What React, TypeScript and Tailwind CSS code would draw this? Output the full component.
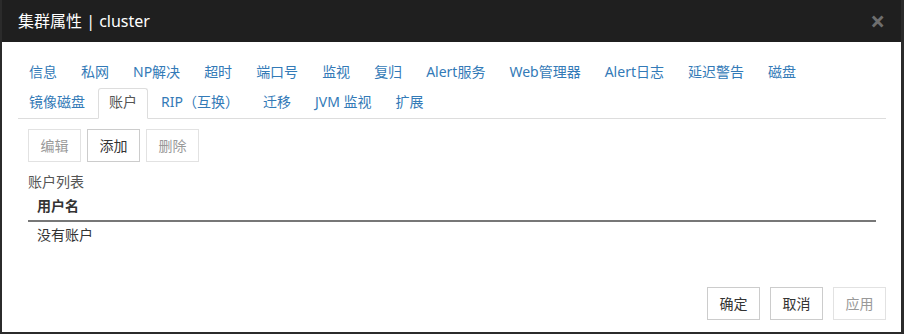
import React from 'react';

const row1 = ['信息', '私网', 'NP解决', '超时', '端口号', '监视', '复归', 'Alert服务', 'Web管理器', 'Alert日志', '延迟警告', '磁盘'];
const row2 = ['镜像磁盘', '账户', 'RIP（互换）', '迁移', 'JVM 监视', '扩展'];

const Tab: React.FC<{ label: string; active?: boolean }> = ({ label, active }) => (
  <div
    className={
      'mr-[2px] px-[10px] pt-[4px] pb-[6px] leading-[18px] border whitespace-nowrap ' +
      (active
        ? 'border-[#ddd] border-b-white bg-white text-[#555] rounded-t-[3px] -mb-px relative z-10'
        : 'border-transparent text-[#337ab7]')
    }
  >
    {label}
  </div>
);

const Btn: React.FC<{ label: string; disabled?: boolean }> = ({ label, disabled }) => (
  <button
    className={
      'h-[33px] w-[53px] border bg-white text-[14px] ' +
      (disabled ? 'border-[#e2e2e2] text-[#999]' : 'border-[#ccc] text-[#333]')
    }
  >
    {label}
  </button>
);

export default function App() {
  return (
    <div
      className="w-[904px] h-[334px] flex flex-col bg-white border-l-2 border-r-[3px] border-b-2 border-[#2b2b2b] text-[14px]"
      style={{ fontFamily: '"Noto Sans", "Noto Sans CJK SC", sans-serif' }}
    >
      {/* header */}
      <div className="h-[42px] bg-[#1f1f1f] flex items-center justify-between pl-[16px] pr-[16px]">
        <span className="text-white text-[16px]">集群属性 | cluster</span>
        <span className="text-[#6e6e6e] text-[26px] font-bold leading-none">×</span>
      </div>

      <div className="flex-1 flex flex-col pl-[16px] pr-[15px] pt-[16px]">
        {/* tabs */}
        <div className="border-b border-[#ddd]">
          <div className="flex">
            {row1.map((t) => (
              <Tab key={t} label={t} />
            ))}
          </div>
          <div className="flex">
            {row2.map((t) => (
              <Tab key={t} label={t} active={t === '账户'} />
            ))}
          </div>
        </div>

        {/* panel */}
        <div className="px-[10px] pt-[10px]">
          <div className="flex gap-[6px]">
            <Btn label="编辑" disabled />
            <Btn label="添加" />
            <Btn label="删除" disabled />
          </div>
          <div className="mt-[10px] text-[#555] leading-[20px]">账户列表</div>
          <div className="mt-[4px] px-[9px] font-bold text-[#333] leading-[20px] pb-[4px] border-b-2 border-[#777]">用户名</div>
          <div className="px-[9px] pt-[3px] text-[#333] leading-[20px]">没有账户</div>
        </div>

        {/* footer */}
        <div className="mt-auto mb-[12px] flex justify-end gap-[10px]">
          <Btn label="确定" />
          <Btn label="取消" />
          <Btn label="应用" disabled />
        </div>
      </div>
    </div>
  );
}
